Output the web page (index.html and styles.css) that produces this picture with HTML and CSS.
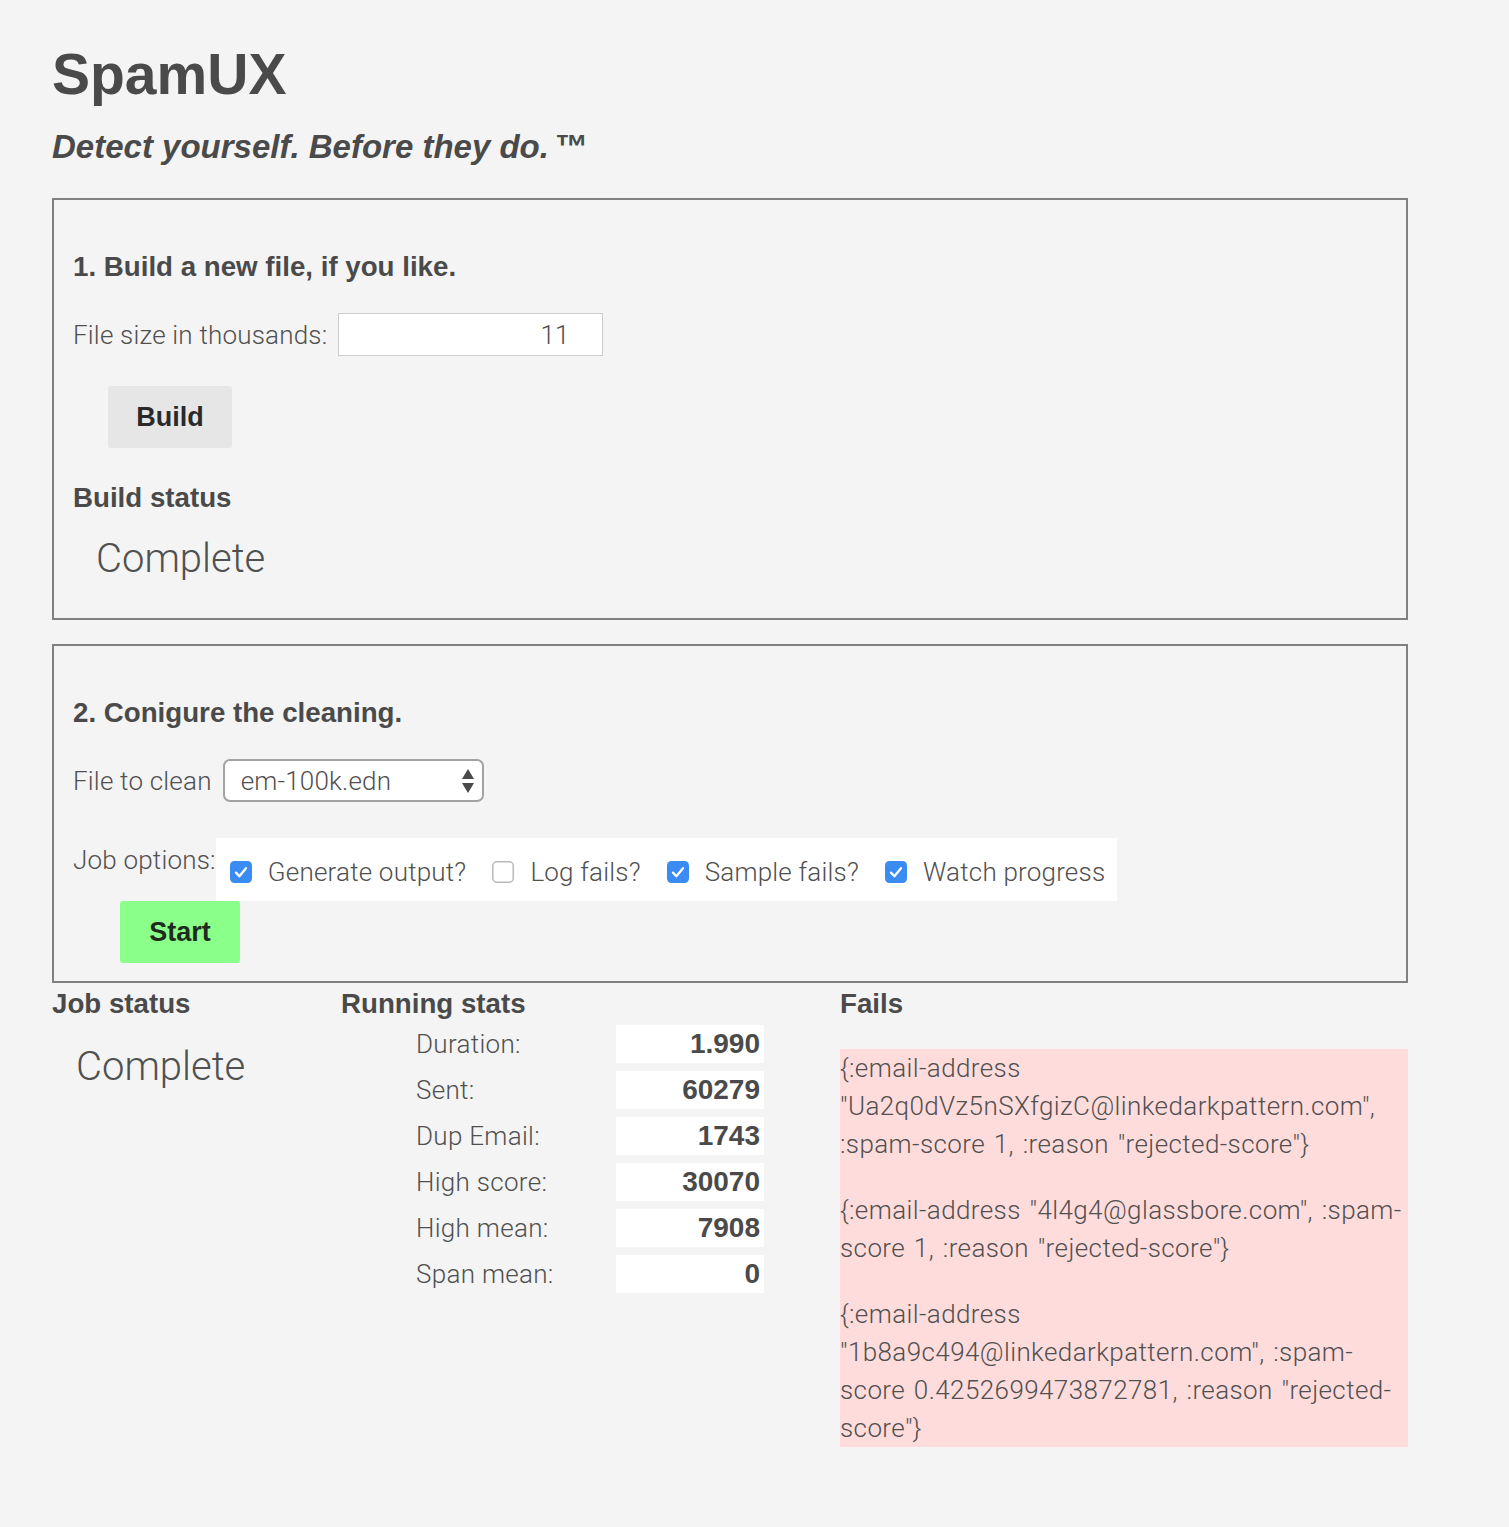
FILE: index.html
```html
<!DOCTYPE html>
<html lang="en">
<head>
<meta charset="utf-8">
<title>SpamUX</title>
<link rel="stylesheet" href="styles.css">
</head>
<body>
<div class="page">
  <h1 class="title">SpamUX</h1>
  <p class="tagline">Detect yourself. Before they do.<span class="tm">™</span></p>

  <section class="panel panel-build">
    <h2 class="panel-title">1. Build a new file, if you like.</h2>
    <div class="field-row">
      <label class="field-label" for="size">File size in thousands:</label>
      <input class="num-input" id="size" type="text" value="11">
    </div>
    <button class="btn btn-build">Build</button>
    <h3 class="sub-title build-status-title">Build status</h3>
    <div class="status status-build">Complete</div>
  </section>

  <section class="panel panel-clean">
    <h2 class="panel-title">2. Conigure the cleaning.</h2>
    <div class="field-row">
      <span class="field-label">File to clean</span>
      <div class="select">
        <span class="select-value">em-100k.edn</span>
        <svg class="select-arrows" width="14" height="26" viewBox="0 0 14 26"><polygon points="7,1 13,11 1,11" fill="#4a4a4a"/><polygon points="1,15 13,15 7,25" fill="#4a4a4a"/></svg>
      </div>
    </div>
    <div class="options-row">
      <span class="options-label">Job options:</span>
      <div class="options">
        <label class="opt">
          <svg class="cb" width="22" height="22" viewBox="0 0 22 22"><rect x="0" y="0" width="22" height="22" rx="4.5" fill="#3a8cf2"/><path d="M6 11.6 L9.4 15.2 L16 7.2" fill="none" stroke="#fff" stroke-width="2.3" stroke-linecap="round" stroke-linejoin="round"/></svg>
          <span>Generate output?</span>
        </label>
        <label class="opt">
          <svg class="cb" width="22" height="22" viewBox="0 0 22 22"><rect x="0.75" y="0.75" width="20.5" height="20.5" rx="4" fill="#fff" stroke="#b9b9b9" stroke-width="1.5"/></svg>
          <span>Log fails?</span>
        </label>
        <label class="opt">
          <svg class="cb" width="22" height="22" viewBox="0 0 22 22"><rect x="0" y="0" width="22" height="22" rx="4.5" fill="#3a8cf2"/><path d="M6 11.6 L9.4 15.2 L16 7.2" fill="none" stroke="#fff" stroke-width="2.3" stroke-linecap="round" stroke-linejoin="round"/></svg>
          <span>Sample fails?</span>
        </label>
        <label class="opt">
          <svg class="cb" width="22" height="22" viewBox="0 0 22 22"><rect x="0" y="0" width="22" height="22" rx="4.5" fill="#3a8cf2"/><path d="M6 11.6 L9.4 15.2 L16 7.2" fill="none" stroke="#fff" stroke-width="2.3" stroke-linecap="round" stroke-linejoin="round"/></svg>
          <span>Watch progress</span>
        </label>
      </div>
    </div>
    <button class="btn btn-start">Start</button>
  </section>

  <div class="results">
    <div class="col col-job">
      <h3 class="sub-title">Job status</h3>
      <div class="status status-job">Complete</div>
    </div>
    <div class="col col-stats">
      <h3 class="sub-title">Running stats</h3>
      <div class="stats">
        <div class="stat"><span class="stat-label">Duration:</span><span class="stat-value">1.990</span></div>
        <div class="stat"><span class="stat-label">Sent:</span><span class="stat-value">60279</span></div>
        <div class="stat"><span class="stat-label">Dup Email:</span><span class="stat-value">1743</span></div>
        <div class="stat"><span class="stat-label">High score:</span><span class="stat-value">30070</span></div>
        <div class="stat"><span class="stat-label">High mean:</span><span class="stat-value">7908</span></div>
        <div class="stat"><span class="stat-label">Span mean:</span><span class="stat-value">0</span></div>
      </div>
    </div>
    <div class="col col-fails">
      <h3 class="sub-title">Fails</h3>
      <div class="fails">
        <p>{:email-address "Ua2q0dVz5nSXfgizC@linkedarkpattern.com", :spam-score 1, :reason "rejected-score"}</p>
        <p>{:email-address "4l4g4@glassbore.com", :spam-score 1, :reason "rejected-score"}</p>
        <p>{:email-address "1b8a9c494@linkedarkpattern.com", :spam-score 0.4252699473872781, :reason "rejected-score"}</p>
      </div>
    </div>
  </div>
</div>
</body>
</html>
```

FILE: styles.css
```css
* { box-sizing: border-box; }

html, body {
  margin: 0;
  background: #f4f4f4;
}

body {
  color: #4a4a4a;
  font-family: "Liberation Sans", Arial, sans-serif;
}

.page {
  width: 1356px;
  margin-left: 52px;
  padding-top: 39px;
}

.title {
  margin: 0;
  font-size: 57px;
  line-height: 70px;
  font-weight: 700;
  color: #4a4a4a;
}

.tagline {
  margin: 19px 0 0;
  font-size: 33px;
  line-height: 38px;
  font-weight: 700;
  font-style: italic;
  color: #4a4a4a;
}

.tm {
  margin-left: 5px;
}

.panel {
  border: 2px solid #808080;
  padding: 0 19px;
}

.panel-build {
  margin-top: 32px;
  padding-bottom: 35px;
}

.panel-clean {
  margin-top: 24px;
  padding-bottom: 18px;
}

.panel-title {
  margin: 51px 0 0;
  font-size: 27.7px;
  line-height: 32px;
  font-weight: 700;
}

.sub-title {
  margin: 0;
  font-size: 27.7px;
  line-height: 32px;
  font-weight: 700;
}

.field-row {
  display: flex;
  align-items: center;
  margin-top: 30px;
  height: 43px;
}

.field-label,
.options-label,
.stat-label,
.status,
.fails,
.opt span,
.select-value,
.num-input {
  font-family: Roboto, "Liberation Sans", sans-serif;
  font-weight: 300;
  color: #505050;
}

.field-label {
  font-size: 26px;
  line-height: 30px;
  letter-spacing: 0.2px;
  margin-right: 11px;
}

.num-input {
  width: 265px;
  height: 43px;
  border: 1px solid #cccccc;
  background: #ffffff;
  font-size: 26px;
  text-align: right;
  padding: 0 33px 0 8px;
  outline: none;
}

.btn {
  display: block;
  border: none;
  height: 62px;
  border-radius: 3px;
  font-family: "Liberation Sans", Arial, sans-serif;
  font-size: 27px;
  font-weight: 700;
  padding: 0;
  color: #2a2a2a;
}

.btn-build {
  margin: 30px 0 0 35px;
  width: 124px;
  background: #e6e6e6;
}

.build-status-title {
  margin-top: 34px;
}

.status {
  font-size: 40px;
  line-height: 48px;
}

.status-build {
  margin: 21px 0 0 23px;
}

.select {
  width: 261px;
  height: 43px;
  border: 2px solid #a3a3a3;
  border-radius: 7px;
  background: #ffffff;
  display: flex;
  align-items: center;
  justify-content: space-between;
  padding: 0 7px 0 16px;
}

.select-value {
  font-size: 26px;
  line-height: 30px;
  letter-spacing: 0.2px;
}

.options-row {
  display: flex;
  align-items: flex-start;
  margin-top: 36px;
}

.options-label {
  font-size: 26px;
  line-height: 30px;
  letter-spacing: 0.2px;
  margin-top: 7px;
}

.options {
  display: flex;
  align-items: center;
  height: 63px;
  padding: 5px 12px 0 14px;
  background: #ffffff;
  gap: 26px;
}

.opt {
  display: flex;
  align-items: center;
  gap: 16px;
}

.opt span {
  font-size: 26px;
  line-height: 30px;
  letter-spacing: 0.2px;
}

.cb {
  display: block;
  flex: none;
}

.btn-start {
  margin-left: 47px;
  width: 120px;
  background: #8aff8a;
  color: #1e2a1e;
}

.results {
  display: grid;
  grid-template-columns: 289px 499px 568px;
}

.col .sub-title {
  margin-top: 5px;
}

.status-job {
  margin: 23px 0 0 24px;
}

.stats {
  margin: 5px 0 0 75px;
  display: flex;
  flex-direction: column;
  gap: 8px;
}

.stat {
  display: grid;
  grid-template-columns: 200px 148px;
  height: 38px;
  align-items: center;
}

.stat-label {
  font-size: 26px;
  line-height: 30px;
  letter-spacing: 0.3px;
}

.stat-value {
  height: 38px;
  background: #ffffff;
  text-align: right;
  padding-right: 4px;
  font-size: 28px;
  line-height: 38px;
  font-weight: 700;
  color: #4a4a4a;
}

.fails {
  margin-top: 29px;
  background: #ffdcdc;
  font-size: 26px;
  line-height: 38px;
  letter-spacing: 0.4px;
  word-spacing: 2px;
}

.fails p {
  margin: 0 0 28px;
}

.fails p:last-child {
  margin-bottom: 0;
}
```
